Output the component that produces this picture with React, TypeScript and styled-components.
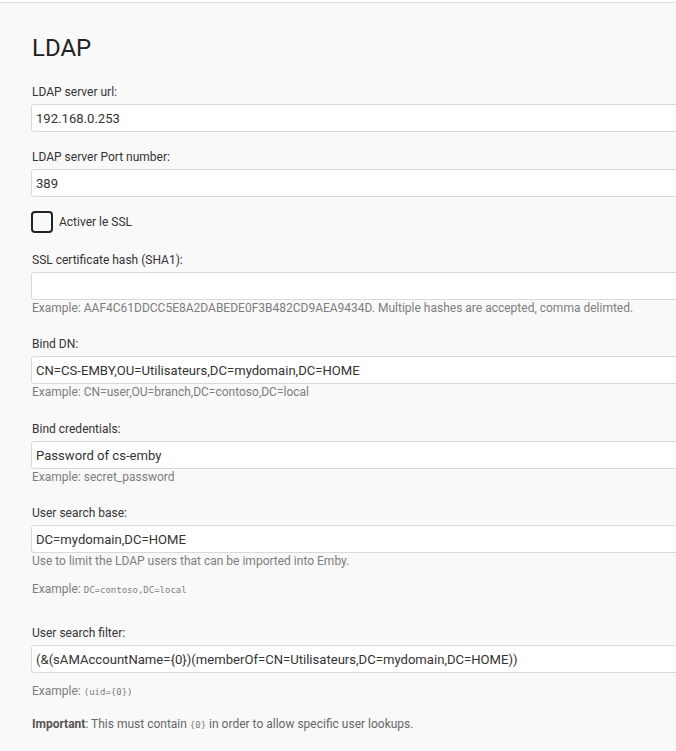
import React from "react";
import styled, { createGlobalStyle } from "styled-components";

const Global = createGlobalStyle`
  html, body { margin: 0; padding: 0; background: #f9f9f9; overflow: hidden; }
  body { font-family: Roboto, "Noto Sans", "Liberation Sans", sans-serif; color: #333; }
  * { box-sizing: border-box; }
`;

const Page = styled.div`
  width: 676px;
  min-height: 751px;
  background: #f9f9f9;
  overflow: hidden;
`;

const TopBar = styled.div`
  height: 3px;
  background: #fff;
  border-bottom: 1px solid #dedede;
`;

const Content = styled.div`
  padding: 31px 0 0 31px;
`;

const Heading = styled.h1`
  margin: 0 0 22px 1px;
  font-size: 24px;
  line-height: 28px;
  font-weight: 400;
  color: #222;
`;

const Field = styled.div<{ $mb?: number }>`
  display: flex;
  flex-direction: column;
  margin-bottom: ${(p) => (p.$mb ?? 17)}px;
`;

const Label = styled.label`
  display: block;
  margin: 0 0 4px 1px;
  font-size: 12px;
  line-height: 16px;
  color: #333;
`;

const Input = styled.div`
  width: 660px;
  height: 28px;
  background: #fff;
  border: 1px solid #d9d9d9;
  border-radius: 3px;
  padding: 0 4px;
  display: flex;
  align-items: center;
  font-size: 13.1px;
  color: #333;
  white-space: nowrap;
`;

const Desc = styled.div<{ $mt?: number }>`
  margin: ${(p) => (p.$mt ?? 0)}px 0 0 1px;
  font-size: 12px;
  line-height: 17px;
  color: #7d7d7d;
  white-space: nowrap;
`;

const Code = styled.code`
  font-family: "DejaVu Sans Mono", "Liberation Mono", monospace;
  font-size: 9px;
  color: #7d7d7d;
`;

const CheckRow = styled.label`
  display: flex;
  align-items: center;
  gap: 6px;
  margin-bottom: 19px;
  font-size: 12px;
  color: #333;
`;

const Box = styled.span`
  width: 22px;
  height: 22px;
  border: 2px solid #222;
  border-radius: 4px;
`;

const Strong = styled.strong`
  font-weight: 700;
  color: #555;
`;

const Note = styled.div`
  margin: 15px 0 0 1px;
  font-size: 12px;
  line-height: 17px;
  color: #666;
`;

export default function App() {
  return (
    <Page>
      <Global />
      <TopBar />
      <Content>
        <Heading>LDAP</Heading>
        <Field>
          <Label>LDAP server url:</Label>
          <Input>192.168.0.253</Input>
        </Field>
        <Field $mb={14}>
          <Label>LDAP server Port number:</Label>
          <Input>389</Input>
        </Field>
        <CheckRow>
          <Box />
          Activer le SSL
        </CheckRow>
        <Field $mb={19}>
          <Label>SSL certificate hash (SHA1):</Label>
          <Input />
          <Desc>Example: AAF4C61DDCC5E8A2DABEDE0F3B482CD9AEA9434D. Multiple hashes are accepted, comma delimted.</Desc>
        </Field>
        <Field $mb={20}>
          <Label>Bind DN:</Label>
          <Input>CN=CS-EMBY,OU=Utilisateurs,DC=mydomain,DC=HOME</Input>
          <Desc>Example: CN=user,OU=branch,DC=contoso,DC=local</Desc>
        </Field>
        <Field $mb={19}>
          <Label>Bind credentials:</Label>
          <Input>Password of cs-emby</Input>
          <Desc>Example: secret_password</Desc>
        </Field>
        <Field $mb={26}>
          <Label>User search base:</Label>
          <Input>DC=mydomain,DC=HOME</Input>
          <Desc>Use to limit the LDAP users that can be imported into Emby.</Desc>
          <Desc $mt={11}>
            Example: <Code>DC=contoso,DC=local</Code>
          </Desc>
        </Field>
        <Field $mb={0}>
          <Label>User search filter:</Label>
          <Input>(&amp;(sAMAccountName={"{0}"})(memberOf=CN=Utilisateurs,DC=mydomain,DC=HOME))</Input>
          <Desc $mt={10}>
            Example: <Code>(uid={"{0}"})</Code>
          </Desc>
        </Field>
        <Note>
          <Strong>Important</Strong>: This must contain <Code>{"{0}"}</Code> in order to allow specific user lookups.
        </Note>
      </Content>
    </Page>
  );
}
